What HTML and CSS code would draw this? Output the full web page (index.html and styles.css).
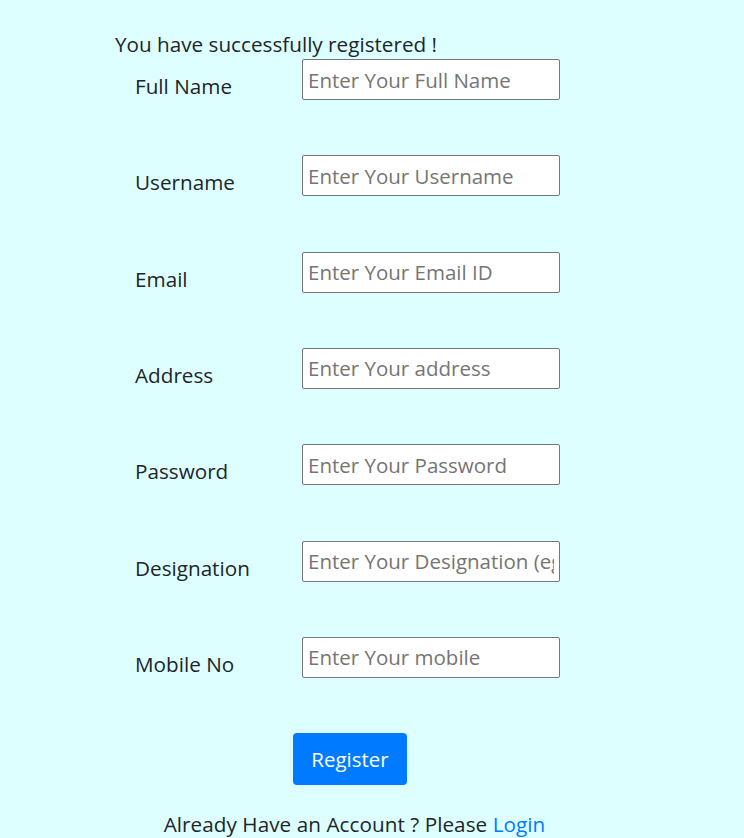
FILE: index.html
```html
<!DOCTYPE html>
<html>
<head>
<meta charset="utf-8">
<link rel="stylesheet" href="styles.css">
</head>
<body>
<div class="page">
  <div class="msg">You have successfully registered !</div>
  <form class="form">
    <div class="row"><label class="lbl">Full Name</label><input class="inp" placeholder="Enter Your Full Name"></div>
    <div class="row"><label class="lbl">Username</label><input class="inp" placeholder="Enter Your Username"></div>
    <div class="row"><label class="lbl">Email</label><input class="inp" placeholder="Enter Your Email ID"></div>
    <div class="row"><label class="lbl">Address</label><input class="inp" placeholder="Enter Your address"></div>
    <div class="row"><label class="lbl">Password</label><input class="inp" type="password" placeholder="Enter Your Password"></div>
    <div class="row"><label class="lbl">Designation</label><input class="inp" placeholder="Enter Your Designation (eg. Manager)"></div>
    <div class="row"><label class="lbl">Mobile No</label><input class="inp" placeholder="Enter Your mobile"></div>
    <div class="actions"><button class="btn" type="button">Register</button></div>
  </form>
  <p class="foot">Already Have an Account ? Please <a href="#" class="link">Login</a></p>
</div>
</body>
</html>
```
FILE: styles.css
```css
html, body {
  margin: 0;
  background: #ddffff;
}
body {
  font-family: "Open Sans", "Noto Sans", sans-serif;
  font-size: 20.7px;
  color: #212529;
}
.page {
  padding: 31px 0 0 115px;
  width: 480px;
}
.msg {
  line-height: 26px;
  height: 28px;
}
.form {
  margin: 0;
}
.row {
  display: flex;
  align-items: flex-start;
  height: 96.33px;
}
.lbl {
  width: 187px;
  padding-left: 20px;
  box-sizing: border-box;
  margin-top: 14px;
  line-height: 26px;
}
.inp {
  width: 258px;
  height: 41px;
  box-sizing: border-box;
  border: 1px solid #767676;
  border-radius: 2px;
  padding: 0 5px;
  font-family: inherit;
  font-size: 20.5px;
  color: #212529;
  background: #fff;
  outline: none;
}
.inp::placeholder {
  color: #757575;
}
.actions {
  padding-left: 178px;
  height: 78px;
}
.btn {
  width: 114px;
  height: 52px;
  background: #007bff;
  color: #fff;
  border: none;
  border-radius: 4px;
  font-family: inherit;
  font-size: 20.5px;
  padding: 0;
}
.foot {
  margin: 0;
  text-align: center;
  line-height: 26px;
  padding-right: 1px;
  letter-spacing: 0.05px;
}
.link {
  color: #007bff;
  text-decoration: none;
}
```
